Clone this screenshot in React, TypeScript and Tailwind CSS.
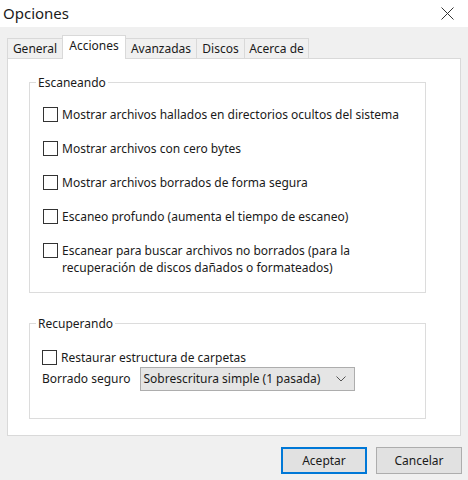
import React from 'react';

const TABS = ['General', 'Acciones', 'Avanzadas', 'Discos', 'Acerca de'];
const TAB_WIDTHS: Record<string, string> = {
  General: 'w-[56px]',
  Acciones: 'w-[64px]',
  Avanzadas: 'w-[72px]',
  Discos: 'w-[49px]',
  'Acerca de': 'w-[65px]',
};

const SCAN_OPTIONS = [
  'Mostrar archivos hallados en directorios ocultos del sistema',
  'Mostrar archivos con cero bytes',
  'Mostrar archivos borrados de forma segura',
  'Escaneo profundo (aumenta el tiempo de escaneo)',
  'Escanear para buscar archivos no borrados (para la recuperación de discos dañados o formateados)',
];

function Checkbox() {
  return <span className="mt-[1px] w-[15px] h-[15px] shrink-0 border border-[#333333] bg-white" />;
}

function CheckRow({ label }: { label: string }) {
  return (
    <label className="flex items-start gap-[4px] leading-[17px]">
      <Checkbox />
      <span className="max-w-[350px]">{label}</span>
    </label>
  );
}

export default function App() {
  return (
    <div
      className="w-[468px] h-[480px] bg-[#f0f0f0] text-[12px] text-[#1a1a1a] flex flex-col"
      style={{ fontFamily: '"Noto Sans", "Open Sans", sans-serif' }}
    >
      {/* Title bar */}
      <div className="h-[27px] bg-white flex items-center justify-between pl-[3px] pr-[14px]">
        <span className="text-[15px] leading-none">Opciones</span>
        <svg width="13" height="13" viewBox="0 0 13 13" fill="none" stroke="#333" strokeWidth="1">
          <path d="M0.5 0.5 L12.5 12.5 M12.5 0.5 L0.5 12.5" />
        </svg>
      </div>

      {/* Tabs */}
      <div className="flex items-end pl-[7px] pt-[8px] h-[31px]">
        {TABS.map((tab) => {
          const active = tab === 'Acciones';
          return (
            <div
              key={tab}
              className={`${TAB_WIDTHS[tab]} flex items-center justify-center border border-[#d9d9d9] border-b-0 -ml-px first:ml-0 ${
                active ? 'h-[24px] bg-white relative z-10 -mb-px pb-[3px]' : 'h-[20px] bg-[#f0f0f0]'
              }`}
            >
              {tab}
            </div>
          );
        })}
      </div>

      {/* Panel */}
      <div className="mx-[7px] w-[454px] h-[378px] bg-white border border-[#d9d9d9] px-[21px] pt-[15px]">
        <fieldset className="w-[397px] border border-[#dcdcdc] px-[13px] pt-[15px] pb-[16px]">
          <legend className="-ml-[7px] px-[2px] leading-[17px]">Escaneando</legend>
          <div className="flex flex-col gap-[17px]">
            {SCAN_OPTIONS.map((opt) => (
              <CheckRow key={opt} label={opt} />
            ))}
          </div>
        </fieldset>

        <fieldset className="mt-[22px] w-[397px] border border-[#dcdcdc] px-[12px] pt-[17px] pb-[27px]">
          <legend className="-ml-[6px] px-[2px] leading-[17px]">Recuperando</legend>
          <CheckRow label="Restaurar estructura de carpetas" />
          <div className="mt-[1px] flex items-center gap-[9px]">
            <span>Borrado seguro</span>
            <div className="w-[215px] h-[24px] bg-[#e5e5e5] border border-[#adadad] flex items-center justify-between pl-[3px] pr-[8px]">
              <span>Sobrescritura simple (1 pasada)</span>
              <svg width="10" height="6" viewBox="0 0 10 6" fill="none" stroke="#555" strokeWidth="1">
                <path d="M0.5 0.5 L5 5 L9.5 0.5" />
              </svg>
            </div>
          </div>
        </fieldset>
      </div>

      {/* Buttons */}
      <div className="flex justify-end gap-[9px] pr-[6px] mt-[11px]">
        <button className="w-[86px] h-[27px] bg-[#e1e1e1] border-2 border-[#0078d7]">Aceptar</button>
        <button className="w-[86px] h-[27px] bg-[#e1e1e1] border border-[#adadad]">Cancelar</button>
      </div>
    </div>
  );
}
